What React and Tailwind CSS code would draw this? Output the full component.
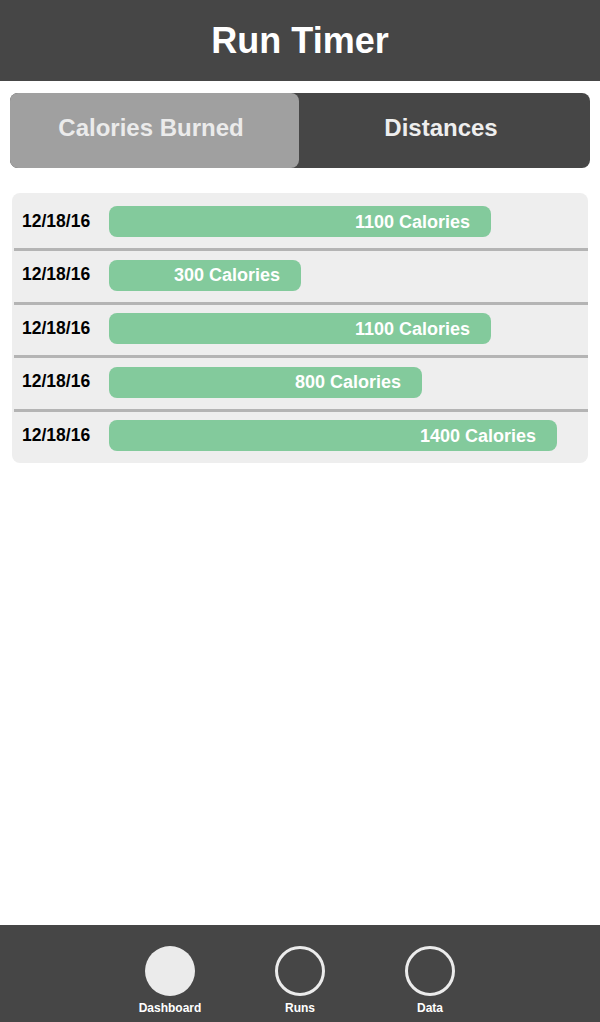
import React from "react";

const rows = [
  { date: "12/18/16", label: "1100 Calories", w: 382 },
  { date: "12/18/16", label: "300 Calories", w: 192 },
  { date: "12/18/16", label: "1100 Calories", w: 382 },
  { date: "12/18/16", label: "800 Calories", w: 313 },
  { date: "12/18/16", label: "1400 Calories", w: 448 },
];

export default function App() {
  return (
    <div
      className="w-[600px] h-[1022px] flex flex-col bg-white"
      style={{ fontFamily: '"Liberation Sans", Arial, sans-serif' }}
    >
      <header className="h-[81px] bg-[#464646] flex items-center justify-center">
        <h1 className="text-white font-bold text-[36px] leading-none">Run Timer</h1>
      </header>

      <main className="flex-1 flex flex-col">
        <div className="mx-[10px] mt-[12px] h-[75px] rounded-lg bg-[#464646] flex">
          <div className="w-[289px] rounded-lg bg-[#a0a0a0] flex items-center justify-center pr-[7px] pb-[5px]">
            <span className="text-[#ebebeb] font-bold text-[24px] leading-none">Calories Burned</span>
          </div>
          <div className="flex-1 flex items-center justify-center pr-[7px] pb-[5px]">
            <span className="text-[#eeeeee] font-bold text-[24px] leading-none">Distances</span>
          </div>
        </div>

        <div className="mx-[12px] mt-[25px] rounded-lg bg-[#eeeeee]">
          {rows.map((r, i) => (
            <React.Fragment key={i}>
              {i > 0 && <div className="ml-[2px] h-[3px] bg-[#b4b4b4]" />}
              <div
                className={
                  (i === 0 ? "pt-[13px] " : "pt-[8.5px] ") +
                  (i === rows.length - 1 ? "pb-[11.5px] " : "pb-[11px] ") +
                  "flex items-center"
                }
              >
                <span className="ml-[10px] w-[87px] text-black font-bold text-[17.5px] leading-none">{r.date}</span>
                <div
                  className="h-[31px] rounded-lg bg-[#83ca9c] flex items-center justify-end pr-[21px]"
                  style={{ width: r.w }}
                >
                  <span className="text-white font-bold text-[18px] leading-none">{r.label}</span>
                </div>
              </div>
            </React.Fragment>
          ))}
        </div>
      </main>

      <nav className="h-[97px] bg-[#464646] flex justify-center pt-[21px]">
        {[
          { label: "Dashboard", filled: true },
          { label: "Runs", filled: false },
          { label: "Data", filled: false },
        ].map((n) => (
          <div key={n.label} className="w-[130px] flex flex-col items-center">
            <div
              className={
                n.filled
                  ? "w-[50px] h-[50px] rounded-full bg-[#ebebeb]"
                  : "w-[50px] h-[50px] rounded-full border-[3px] border-[#ebebeb]"
              }
            />
            <span className="mt-[5px] text-white font-bold text-[12px] leading-[14px]">{n.label}</span>
          </div>
        ))}
      </nav>
    </div>
  );
}
